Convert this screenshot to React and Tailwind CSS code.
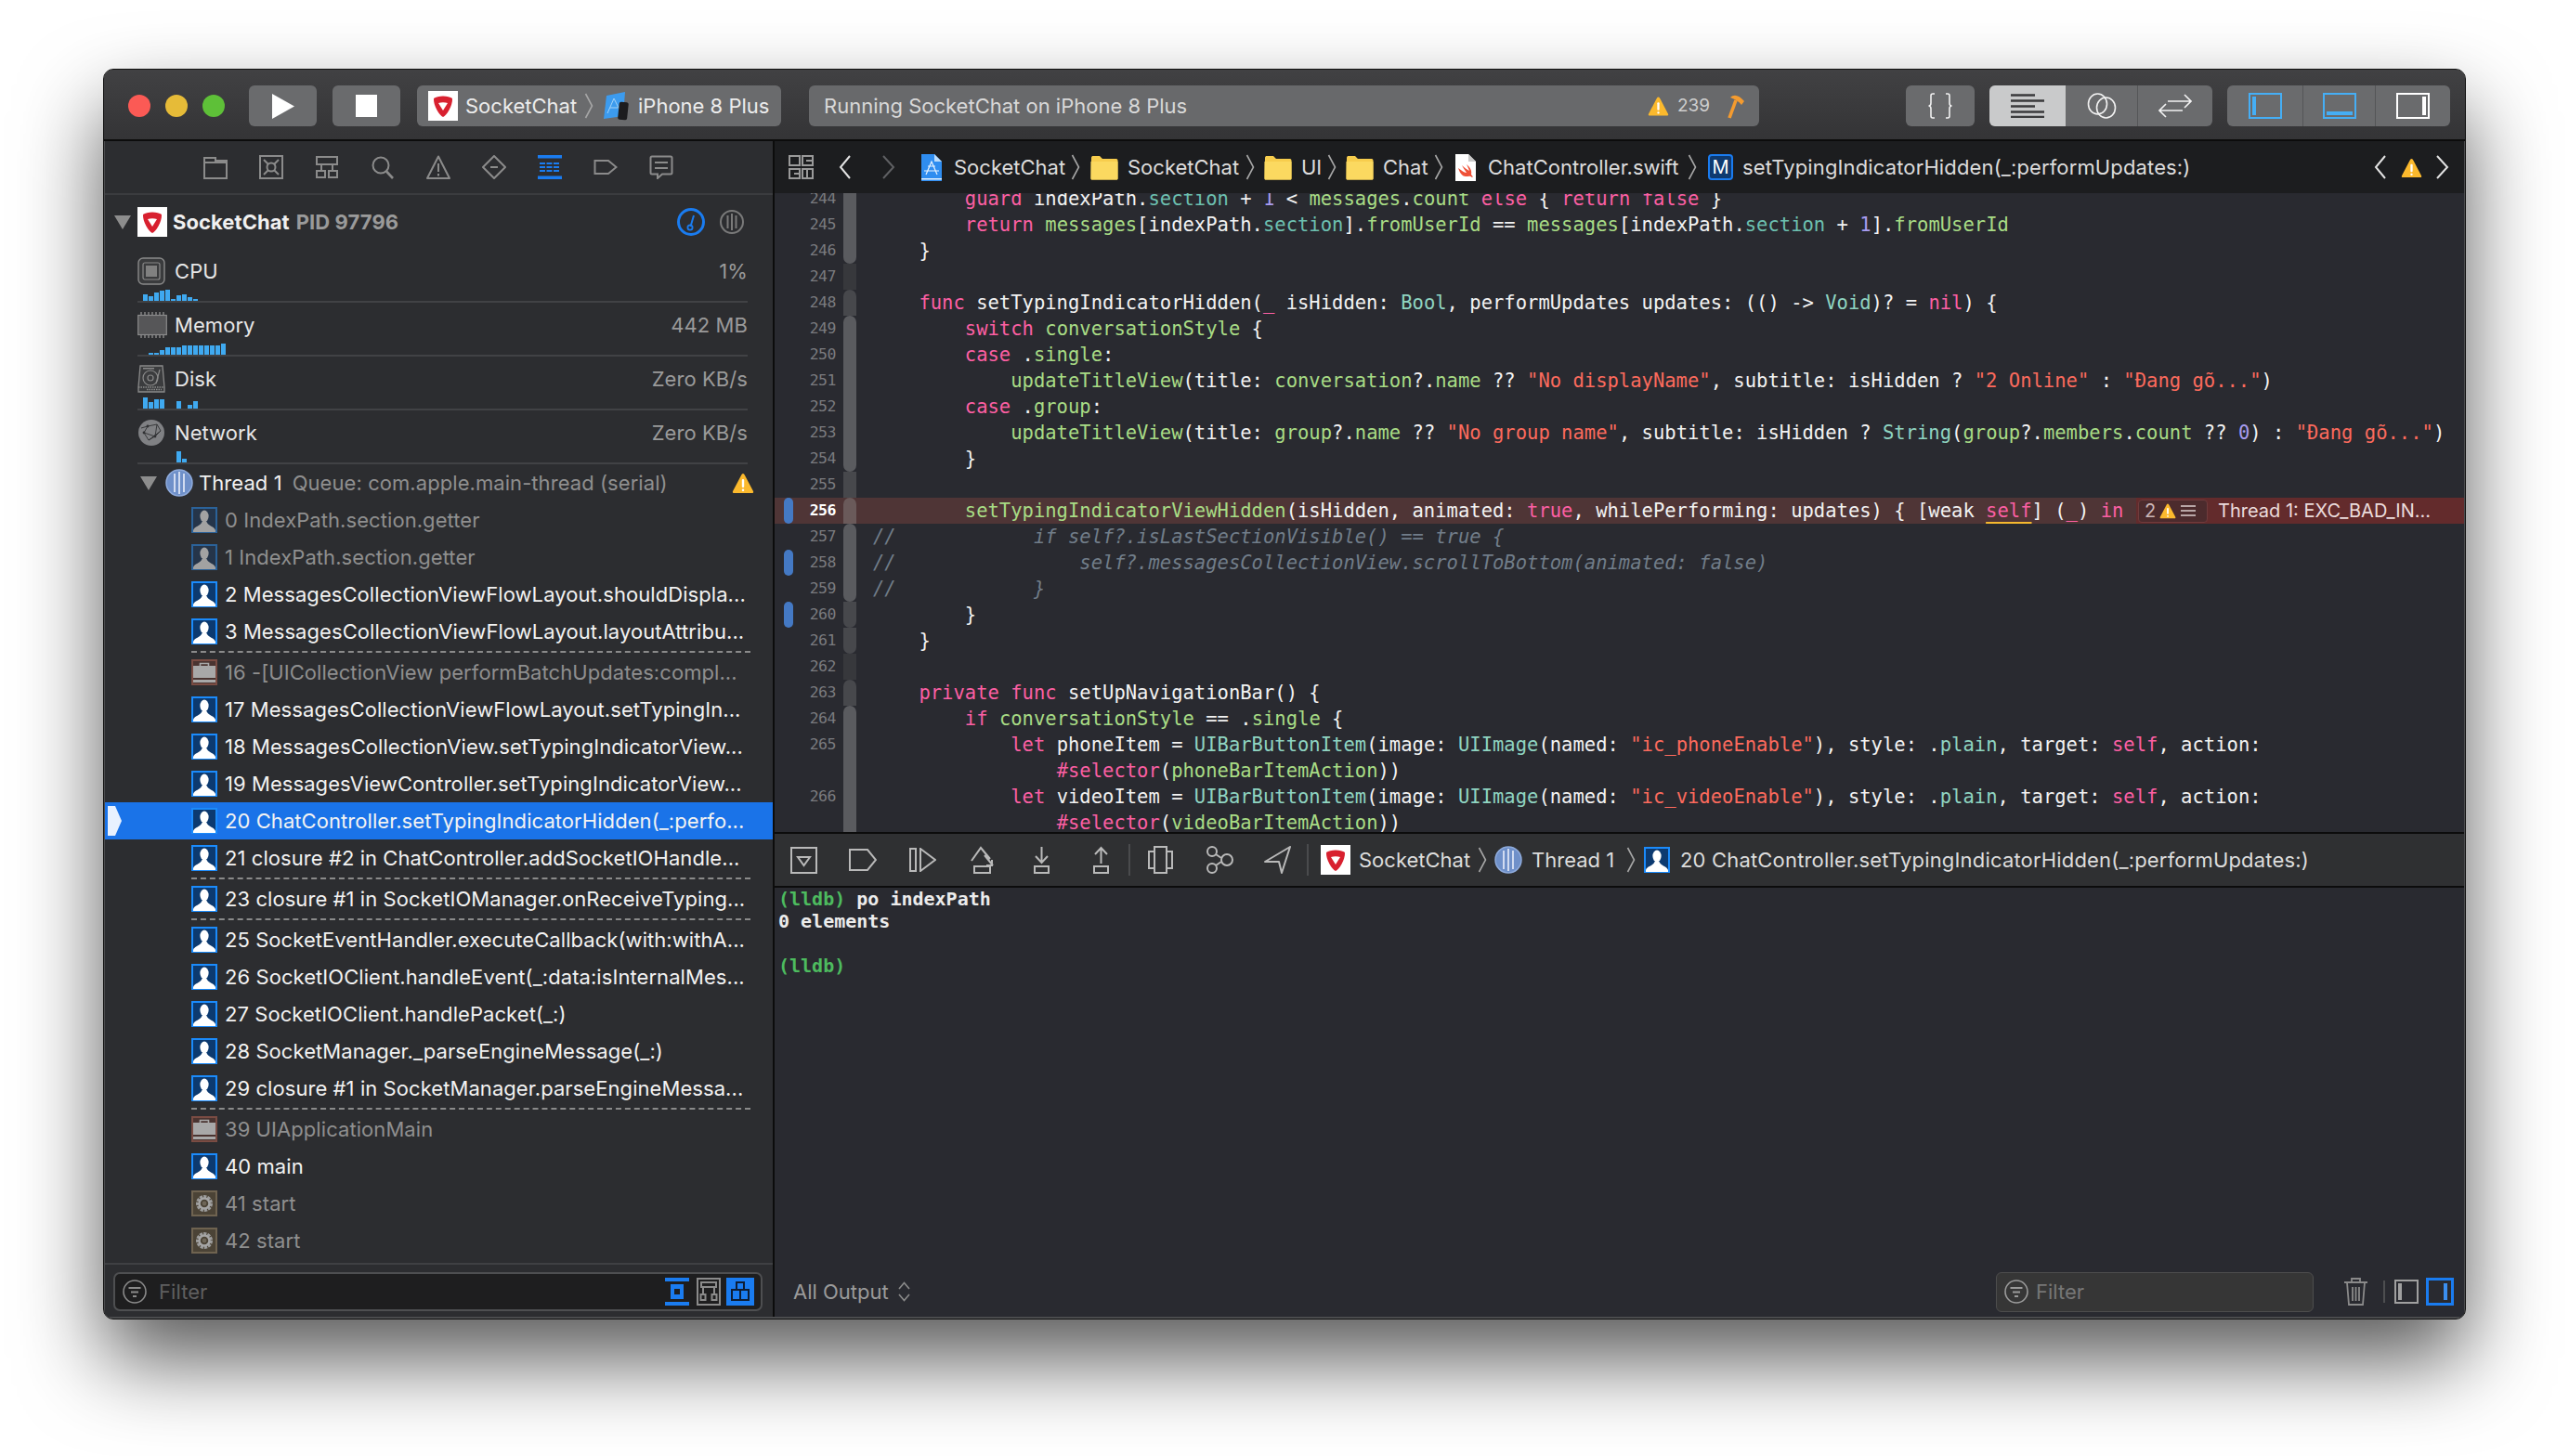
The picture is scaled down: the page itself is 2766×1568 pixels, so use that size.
import React from 'react';

const codeColors = {
  k: 'text-[#fc5fa3]',
  g: 'text-[#a8dc85]',
  t: 'text-[#6dc0b0]',
  T: 'text-[#8fd4c1]',
  s: 'text-[#fc6a5d]',
  n: 'text-[#a79cf0]',
  c: 'text-[#717d89] italic',
  u: 'text-[#fc5fa3] underline decoration-[#f5b82e] decoration-2 underline-offset-[5px]',
};

// « color : text » markup for the code lines
const Code = ({ text }) => {
  const parts = text.split(/(«\w:.*?»)/);
  return (
    <>
      {parts.map((p, i) => {
        const m = p.match(/^«(\w):(.*)»$/);
        if (m) return <span key={i} className={codeColors[m[1]]}>{m[2]}</span>;
        return <span key={i}>{p}</span>;
      })}
    </>
  );
};

const R_DARK = 'bg-[#37383c]';
const R_MID = 'bg-[#47484c]';
const R_LIGHT = 'bg-[#5a5b5f]';

const lines = [
  { n: 244, rib: R_LIGHT, code: '        «k:guard» indexPath.«t:section» + «n:1» < «g:messages».«g:count» «k:else» { «k:return» «k:false» }' },
  { n: 245, rib: R_LIGHT, code: '        «k:return» «g:messages»[indexPath.«t:section»].«g:fromUserId» == «g:messages»[indexPath.«t:section» + «n:1»].«g:fromUserId»' },
  { n: 246, rib: R_LIGHT + ' rounded-b-[7px]', code: '    }' },
  { n: 247, rib: R_DARK, code: '' },
  { n: 248, rib: R_MID + ' rounded-t-[7px]', code: '    «k:func» setTypingIndicatorHidden(«k:_» isHidden: «T:Bool», performUpdates updates: (() -> «T:Void»)? = «k:nil») {' },
  { n: 249, rib: R_LIGHT + ' rounded-t-[7px]', code: '        «k:switch» «g:conversationStyle» {' },
  { n: 250, rib: R_LIGHT, code: '        «k:case» .«g:single»:' },
  { n: 251, rib: R_LIGHT, code: '            «g:updateTitleView»(title: «g:conversation»?.«g:name» ?? «s:"No displayName"», subtitle: isHidden ? «s:"2 Online"» : «s:"Đang gõ..."»)' },
  { n: 252, rib: R_LIGHT, code: '        «k:case» .«g:group»:' },
  { n: 253, rib: R_LIGHT, code: '            «g:updateTitleView»(title: «g:group»?.«g:name» ?? «s:"No group name"», subtitle: isHidden ? «T:String»(«g:group»?.«g:members».«g:count» ?? «n:0») : «s:"Đang gõ..."»)' },
  { n: 254, rib: R_LIGHT + ' rounded-b-[7px]', code: '        }' },
  { n: 255, rib: R_MID, code: '' },
  { n: 256, rib: 'bg-[#6a5a5a] rounded-t-[7px]', bp: true, crash: true, code: '        «g:setTypingIndicatorViewHidden»(isHidden, animated: «k:true», whilePerforming: updates) { [weak «u:self»] («k:_») «k:in»' },
  { n: 257, rib: R_LIGHT + ' rounded-t-[7px]', code: '«c://            if self?.isLastSectionVisible() == true {»' },
  { n: 258, rib: R_LIGHT, bp: true, code: '«c://                self?.messagesCollectionView.scrollToBottom(animated: false)»' },
  { n: 259, rib: R_LIGHT + ' rounded-b-[7px]', code: '«c://            }»' },
  { n: 260, rib: R_MID + ' rounded-b-[7px]', bp: true, code: '        }' },
  { n: 261, rib: R_MID + ' rounded-b-[7px]', code: '    }' },
  { n: 262, rib: R_DARK, code: '' },
  { n: 263, rib: R_MID + ' rounded-t-[7px]', code: '    «k:private» «k:func» setUpNavigationBar() {' },
  { n: 264, rib: R_LIGHT + ' rounded-t-[7px]', code: '        «k:if» «g:conversationStyle» == .«g:single» {' },
  { n: 265, rib: R_LIGHT, code: '            «k:let» phoneItem = «T:UIBarButtonItem»(image: «T:UIImage»(named: «s:"ic_phoneEnable"»), style: .«T:plain», target: «k:self», action:' },
  { rib: R_LIGHT, code: '                «k:#selector»(«g:phoneBarItemAction»))' },
  { n: 266, rib: R_LIGHT, code: '            «k:let» videoItem = «T:UIBarButtonItem»(image: «T:UIImage»(named: «s:"ic_videoEnable"»), style: .«T:plain», target: «k:self», action:' },
  { rib: R_LIGHT, code: '                «k:#selector»(«g:videoBarItemAction»))' },
];

const frames = [
  { t: 'u', dim: true, s: '0 IndexPath.section.getter' },
  { t: 'u', dim: true, s: '1 IndexPath.section.getter' },
  { t: 'u', s: '2 MessagesCollectionViewFlowLayout.shouldDispla...' },
  { t: 'u', s: '3 MessagesCollectionViewFlowLayout.layoutAttribu...' },
  { sep: true },
  { t: 'b', dim: true, s: '16 -[UICollectionView performBatchUpdates:compl...' },
  { t: 'u', s: '17 MessagesCollectionViewFlowLayout.setTypingIn...' },
  { t: 'u', s: '18 MessagesCollectionView.setTypingIndicatorView...' },
  { t: 'u', s: '19 MessagesViewController.setTypingIndicatorView...' },
  { t: 'u', sel: true, s: '20 ChatController.setTypingIndicatorHidden(_:perfo...' },
  { t: 'u', s: '21 closure #2 in ChatController.addSocketIOHandle...' },
  { sep: true },
  { t: 'u', s: '23 closure #1 in SocketIOManager.onReceiveTyping...' },
  { sep: true },
  { t: 'u', s: '25 SocketEventHandler.executeCallback(with:withA...' },
  { t: 'u', s: '26 SocketIOClient.handleEvent(_:data:isInternalMes...' },
  { t: 'u', s: '27 SocketIOClient.handlePacket(_:)' },
  { t: 'u', s: '28 SocketManager._parseEngineMessage(_:)' },
  { t: 'u', s: '29 closure #1 in SocketManager.parseEngineMessa...' },
  { sep: true },
  { t: 'b', dim: true, s: '39 UIApplicationMain' },
  { t: 'u', s: '40 main' },
  { t: 'g', dim: true, s: '41 start' },
  { t: 'g', dim: true, s: '42 start' },
];

const gauges = [
  { label: 'CPU', value: '1%', icon: 'cpu', pad: 6, bars: [7, 5, 9, 11, 12, 2, 6, 7, 4, 2] },
  { label: 'Memory', value: '442 MB', icon: 'mem', pad: 12, bars: [2, 2, 5, 8, 8, 8, 10, 10, 10, 10, 10, 10, 10, 12] },
  { label: 'Disk', value: 'Zero KB/s', icon: 'disk', pad: 6, bars: [12, 7, 10, 10, 0, 0, 8, 0, 4, 8] },
  { label: 'Network', value: 'Zero KB/s', icon: 'net', pad: 6, bars: [0, 0, 0, 0, 0, 0, 12, 4] },
];

/* ---- icons ---- */

const AppLogo = ({ size = 32 }) => (
  <svg width={size} height={size} viewBox="0 0 32 32" className="shrink-0">
    <rect width="32" height="32" fill="#fff" />
    <path d="M6 8 C10 4.5 22 4.5 26 8 C26.5 16 20 26 16 28 C12 26 5.5 16 6 8 Z" fill="#d8202f" />
    <path d="M11 13 C14 12 18 12 21 13 L16 21 Z" fill="#fff" />
  </svg>
);

const Warn = ({ w = 24, h = 24 }) => (
  <svg width={w} height={h} viewBox="0 0 24 24" className="shrink-0">
    <path d="M12 2 C13 2 13.5 3 14 4 L23 21 C23.5 22.5 23 23 21.5 23 L2.5 23 C1 23 .5 22.5 1 21 L10 4 C10.5 3 11 2 12 2 Z" fill="#fbb92d" />
    <rect x="10.8" y="8" width="2.4" height="9" rx="1" fill="#fff" />
    <rect x="10.8" y="18.5" width="2.4" height="2.4" rx="1" fill="#fff" />
  </svg>
);

const ThreadIcon = ({ w = 30, h = 30 }) => (
  <svg width={w} height={h} viewBox="0 0 30 30" className="shrink-0">
    <circle cx="15" cy="15" r="14" fill="#6f90c9" stroke="#8fabdc" strokeWidth="1.5" />
    <path d="M10 5 V25 M15 3 V27 M20 5 V25" stroke="#e9eefa" strokeWidth="1.6" />
  </svg>
);

const UserFrame = ({ dim }) => (
  <svg width="28" height="28" viewBox="0 0 28 28" className="shrink-0">
    <rect x="1" y="1" width="26" height="26" fill={dim ? '#25354a' : '#0c3a70'} stroke={dim ? '#2b6299' : '#1b8bfb'} strokeWidth="2" />
    <ellipse cx="14" cy="10" rx="4.6" ry="6.4" fill={dim ? '#a2a2a2' : '#fff'} />
    <path d="M2 27 V25 C3 21 10 20.5 11.5 16 H16.5 C18 20.5 25 21 26 25 V27 Z" fill={dim ? '#a2a2a2' : '#fff'} />
  </svg>
);

const CaseFrame = () => (
  <svg width="28" height="28" viewBox="0 0 28 28" className="shrink-0">
    <rect x="1" y="1" width="26" height="26" fill="#4a3431" stroke="#7a4c43" strokeWidth="2" />
    <path d="M9.5 7 V4.5 H18.5 V7" fill="none" stroke="#a8a8a8" strokeWidth="1.6" />
    <rect x="2" y="7" width="24" height="13" fill="#a8a8a8" />
    <rect x="2" y="22" width="24" height="3" fill="#a8a8a8" />
  </svg>
);

const GearFrame = () => (
  <svg width="28" height="28" viewBox="0 0 28 28" className="shrink-0">
    <rect x="1" y="1" width="26" height="26" fill="#4b4336" stroke="#6f6350" strokeWidth="2" />
    <circle cx="14" cy="14" r="7" fill="none" stroke="#9c9c9c" strokeWidth="4" strokeDasharray="3 1" />
    <circle cx="14" cy="14" r="5.5" fill="none" stroke="#a6a6a6" strokeWidth="2.5" />
    <circle cx="14" cy="14" r="2.4" fill="#6e6658" />
  </svg>
);

const Tri = ({ w = 18, h = 15 }) => (
  <svg width={w} height={h} viewBox="0 0 18 15" className="shrink-0">
    <path d="M0 0 H18 L9 15 Z" fill="#8d8d8d" />
  </svg>
);

const Chev = ({ w = 10, h = 28 }) => (
  <svg width={w} height={h} viewBox="0 0 10 28" className="shrink-0" fill="none">
    <path d="M1.5 1 L8.5 14 L1.5 27" stroke="#a6a6a6" strokeWidth="1.6" />
  </svg>
);

const Ic = ({ w = 26, h = 26, vb = '0 0 26 26', c = '#8b8b8b', sw = 2, children }) => (
  <svg width={w} height={h} viewBox={vb} fill="none" stroke={c} strokeWidth={sw} className="shrink-0">
    {children}
  </svg>
);

const NavIcons = [
  <Ic key="0"><path d="M1 4 V25 H25 V6 H13 V3 H1 Z M1 8 H25" /></Ic>,
  <Ic key="1"><rect x="1" y="1" width="24" height="24" /><path d="M5 5 L10 10 M21 5 L16 10 M5 21 L10 16 M21 21 L16 16" /><circle cx="13" cy="13" r="4.5" /></Ic>,
  <Ic key="2"><rect x="2" y="2" width="22" height="8" /><path d="M7 10 V16 M19 10 V16" /><rect x="2" y="17" width="9" height="7" /><rect x="15" y="17" width="9" height="7" /></Ic>,
  <Ic key="3"><circle cx="11" cy="11" r="8.5" /><path d="M17 17.5 L24 25" strokeWidth="2.6" /></Ic>,
  <Ic key="4"><path d="M13 1.5 L25 25 H1 Z" strokeLinejoin="round" /><path d="M13 9 V18 M13 20 V22.5" /></Ic>,
  <Ic key="5"><path d="M13 1 L25 13 L13 25 L1 13 Z" strokeLinejoin="round" /><path d="M9 13 H17" /></Ic>,
  <Ic key="6" c="#1a7cf0"><rect x="0" y="0" width="26" height="3.5" fill="#1a7cf0" stroke="none" /><rect x="0" y="22.5" width="26" height="3.5" fill="#1a7cf0" stroke="none" /><path d="M2 9 H24 M2 13 H24 M2 17 H24" strokeDasharray="6 1.5" /></Ic>,
  <Ic key="7"><path d="M1.5 6 H16 L24.5 13 L16 20 H1.5 Z" /></Ic>,
  <Ic key="8"><path d="M3 1.5 H23 C24 1.5 24.5 2 24.5 3 V19 C24.5 20 24 20.5 23 20.5 H14 L9 25 V20.5 H3 C2 20.5 1.5 20 1.5 19 V3 C1.5 2 2 1.5 3 1.5 Z" /><path d="M6 8 H20 M6 14 H20" /></Ic>,
];

const GaugeIcon = ({ type }) => {
  if (type === 'cpu')
    return (
      <svg width="30" height="30" viewBox="0 0 30 30" className="shrink-0">
        <rect x="1" y="1" width="28" height="28" rx="5" fill="#3a3b3d" stroke="#8a8a8a" strokeWidth="1.4" />
        <rect x="6" y="6" width="18" height="18" rx="2" fill="none" stroke="#8a8a8a" strokeWidth="1.2" />
        <rect x="9" y="9" width="12" height="12" fill="#808080" />
      </svg>
    );
  if (type === 'mem')
    return (
      <svg width="32" height="28" viewBox="0 0 32 28" className="shrink-0">
        <path d="M4 0 V4 M8 0 V4 M12 0 V4 M16 0 V4 M20 0 V4 M24 0 V4 M28 0 V4 M4 24 V28 M8 24 V28 M12 24 V28 M16 24 V28 M20 24 V28 M24 24 V28 M28 24 V28" stroke="#8a8a8a" strokeWidth="1.4" />
        <rect x=".7" y="3.5" width="30.6" height="21" fill="#565658" stroke="#8a8a8a" strokeWidth="1.2" />
      </svg>
    );
  if (type === 'disk')
    return (
      <svg width="30" height="30" viewBox="0 0 30 30" className="shrink-0">
        <path d="M3 1 H27 L29 24 V29 H1 V24 Z" fill="#3b3c3e" stroke="#8a8a8a" strokeWidth="1.3" />
        <rect x="6" y="3" width="12" height="1.5" fill="#8a8a8a" />
        <circle cx="14" cy="14" r="8" fill="none" stroke="#8a8a8a" strokeWidth="1.2" />
        <circle cx="14" cy="14" r="3" fill="none" stroke="#8a8a8a" strokeWidth="1.2" />
        <path d="M24 5 L20 20" stroke="#8a8a8a" strokeWidth="1.2" />
        <path d="M1 24 H29 M10 26.5 H26" stroke="#8a8a8a" strokeWidth="1.6" strokeDasharray="1.5 1" />
      </svg>
    );
  return (
    <svg width="30" height="30" viewBox="0 0 30 30" className="shrink-0">
      <circle cx="15" cy="15" r="14" fill="#808184" />
      <path d="M4 10 L11 8 L21 6 L25 13 L19 19 L12 23 L7 15 L11 8 M21 6 L19 19 M7 15 L19 19 M25 13 L12 23" stroke="#303133" strokeWidth=".9" fill="none" />
      <circle cx="11" cy="8" r="1.4" fill="#303133" />
      <circle cx="19" cy="19" r="1.4" fill="#303133" />
      <circle cx="7" cy="15" r="1.4" fill="#303133" />
    </svg>
  );
};

const Folder = () => (
  <svg width="30" height="27" viewBox="0 0 30 27" className="shrink-0">
    <path d="M1 3 C1 1.5 2 1 3 1 H10 L13 4 H28 C29 4 29.5 5 29.5 6 V25 C29.5 26 29 26.5 28 26.5 H2 C1 26.5 .5 26 .5 25 Z" fill="#f7cd4d" />
    <path d="M.5 7 H29.5 V25 C29.5 26 29 26.5 28 26.5 H2 C1 26.5 .5 26 .5 25 Z" fill="#fbd960" />
  </svg>
);

const FilterIcon = ({ c = '#8a8a8a' }) => (
  <svg width="26" height="26" viewBox="0 0 26 26" fill="none" className="shrink-0">
    <circle cx="13" cy="13" r="12" stroke={c} strokeWidth="1.6" />
    <path d="M6.5 9 H19.5 M9 13.5 H17 M11 18 H15" stroke={c} strokeWidth="2" />
  </svg>
);

const ModeButton = ({ w, active, border, children }) => (
  <div className={`flex h-full items-center justify-center ${w} ${active ? 'bg-[#c9cacb]' : ''} ${border ? 'border-l border-[#555658]' : ''}`}>
    {children}
  </div>
);

const TitleBar = () => (
  <div className="flex h-[77px] shrink-0 items-center border-b-2 border-[#0c0c0c] bg-gradient-to-b from-[#414143] to-[#343436] pt-[3px]">
    <div className="ml-[26px] h-[24px] w-[24px] rounded-full bg-[#fb5a55]" />
    <div className="ml-[16px] h-[24px] w-[24px] rounded-full bg-[#e6bb38]" />
    <div className="ml-[16px] h-[24px] w-[24px] rounded-full bg-[#5ec038]" />

    <div className="ml-[26px] flex h-[44px] w-[73px] items-center justify-center rounded-[6px] bg-[#6a6b6d]">
      <svg width="24" height="27" viewBox="0 0 24 27"><path d="M0 0 L24 13.5 L0 27 Z" fill="#fff" /></svg>
    </div>
    <div className="ml-[17px] flex h-[44px] w-[73px] items-center justify-center rounded-[6px] bg-[#6a6b6d]">
      <div className="h-[24px] w-[23px] bg-white" />
    </div>

    <div className="ml-[18px] flex h-[44px] w-[392px] items-center rounded-[6px] bg-[#6a6b6d] pl-[12px] text-[22px] text-[#ececec]">
      <AppLogo />
      <span className="ml-[8px] w-[121px]">SocketChat</span>
      <span className="ml-[7px]"><Chev /></span>
      <svg width="28" height="32" viewBox="0 0 28 32" className="ml-[10px] shrink-0">
        <path d="M4 5 L24 1 L22 27 L1 30 Z" fill="#3c9bee" />
        <path d="M5 24 L12 8 L19 22 M8 18 H16" stroke="#a5d4f8" strokeWidth="1" fill="none" />
        <rect x="17" y="12" width="10" height="19" rx="2" fill="#1c1c1e" transform="rotate(6 22 21)" />
      </svg>
      <span className="ml-[10px]">iPhone 8 Plus</span>
    </div>

    <div className="ml-[30px] flex h-[44px] w-[1023px] items-center rounded-[6px] bg-[#68696b] pl-[16px] text-[22px] text-[#d8d8d8]">
      <span>Running SocketChat on iPhone 8 Plus</span>
      <span className="ml-auto"><Warn w={23} h={24} /></span>
      <span className="ml-[9px] w-[34px] text-[19px] text-[#cfcfcf]">239</span>
      <svg width="20" height="28" viewBox="0 0 20 28" className="ml-[19px] mr-[15px] shrink-0" fill="none">
        <path d="M3 27 L10 8" stroke="#f49b2f" strokeWidth="3.6" />
        <path d="M4 5 C8 1 13 2 19 9 L16 13 C13 9 9 7 4 5 Z" fill="#f49b2f" />
      </svg>
    </div>

    <div className="ml-[158px] flex h-[44px] w-[74px] items-center justify-center rounded-[6px] bg-[#6a6b6d]">
      <svg width="26" height="28" viewBox="0 0 26 28" fill="none" stroke="#f2f2f2" strokeWidth="1.6">
        <path d="M7 1 H5 C3.5 1 3 2 3 3 V11 C3 13 2 14 .5 14 C2 14 3 15 3 17 V25 C3 26 3.5 27 5 27 H7" />
        <path d="M19 1 H21 C22.5 1 23 2 23 3 V11 C23 13 24 14 25.5 14 C24 14 23 15 23 17 V25 C23 26 22.5 27 21 27 H19" />
      </svg>
    </div>

    <div className="ml-[16px] flex h-[44px] w-[240px] overflow-hidden rounded-[6px] bg-[#6a6b6d]">
      <ModeButton w="w-[82px]" active>
        <svg width="36" height="26" viewBox="0 0 36 26" stroke="#3a3a3c" strokeWidth="2.4">
          <path d="M0 1.5 H26 M0 7.5 H36 M0 13.5 H26 M0 19.5 H36 M0 25 H36" />
        </svg>
      </ModeButton>
      <ModeButton w="w-[77px]">
        <svg width="32" height="28" viewBox="0 0 32 28" fill="none" stroke="#f2f2f2" strokeWidth="1.6">
          <ellipse cx="11.5" cy="12" rx="10" ry="11" />
          <ellipse cx="20.5" cy="16" rx="10" ry="11" />
        </svg>
      </ModeButton>
      <ModeButton w="w-[81px]" border>
        <svg width="36" height="28" viewBox="0 0 36 28" fill="none" stroke="#f2f2f2" strokeWidth="1.6">
          <path d="M10 9 H35 M28 2 L35 9 L28 16" />
          <path d="M26 19 H1 M8 12 L1 19 L8 26" />
        </svg>
      </ModeButton>
    </div>

    <div className="ml-[16px] flex h-[44px] w-[240px] overflow-hidden rounded-[6px] bg-[#6a6b6d]">
      <ModeButton w="w-[81px]">
        <svg width="36" height="28" viewBox="0 0 36 28" fill="none">
          <rect x="1" y="1" width="34" height="26" stroke="#45aef5" strokeWidth="2" />
          <rect x="4" y="4" width="4" height="20" fill="#45aef5" />
        </svg>
      </ModeButton>
      <ModeButton w="w-[78px]" border>
        <svg width="36" height="28" viewBox="0 0 36 28" fill="none">
          <rect x="1" y="1" width="34" height="26" stroke="#45aef5" strokeWidth="2" />
          <rect x="4" y="20" width="28" height="4" fill="#45aef5" />
        </svg>
      </ModeButton>
      <ModeButton w="w-[81px]" border>
        <svg width="36" height="28" viewBox="0 0 36 28" fill="none">
          <rect x="1" y="1" width="34" height="26" stroke="#fff" strokeWidth="2" />
          <rect x="28" y="4" width="4" height="20" fill="#fff" />
        </svg>
      </ModeButton>
    </div>
  </div>
);

const GaugeRow = ({ g }) => (
  <div className="ml-[35px] mr-[27px] flex h-[58px] flex-col border-b-2 border-[#414245]">
    <div className="mt-[2px] flex h-[44px] shrink-0 items-center">
      <div className="flex w-[40px] shrink-0"><GaugeIcon type={g.icon} /></div>
      <span className="text-[#e6e6e6]">{g.label}</span>
      <span className="ml-auto text-[#9a9a9a]">{g.value}</span>
    </div>
    <div className="flex h-[10px] shrink-0 items-end gap-[1.5px]" style={{ paddingLeft: g.pad }}>
      {g.bars.map((h, i) => (
        <div key={i} className="w-[4.5px] shrink-0 bg-[#3fa9f0]" style={{ height: h }} />
      ))}
    </div>
  </div>
);

const FrameRow = ({ f }) => {
  if (f.sep) return <div className="ml-[93px] mr-[24px] flex h-[4px] items-center"><div className="w-full border-t-2 border-dashed border-[#8a8a8a]" /></div>;
  return (
    <div className={`flex h-[40px] items-center pl-[93px] whitespace-nowrap ${f.sel ? 'bg-[#1a73e8]' : ''}`}>
      {f.t === 'u' && <UserFrame dim={f.dim} />}
      {f.t === 'b' && <CaseFrame />}
      {f.t === 'g' && <GearFrame />}
      <span className={`ml-[8px] ${f.dim ? 'text-[#8f8f8f]' : 'text-[#f2f2f2]'}`}>{f.s}</span>
      {f.sel && (
        <svg width="15" height="32" viewBox="0 0 15 32" className="absolute left-[3px]">
          <path d="M0 0 H8 L15 16 L8 32 H0 Z" fill="#e8f1ff" />
        </svg>
      )}
    </div>
  );
};

const Sidebar = () => (
  <div className="relative flex w-[721px] shrink-0 flex-col border-r-2 border-[#0c0c0c] bg-[#2c2d30] text-[22px] tracking-[0.003em]">
    <div className="flex h-[58px] shrink-0 items-center border-b-2 border-[#3b3c3f] bg-[#2c2d30] pl-[89px]">
      {NavIcons.map((icon, i) => (
        <div key={i} className="flex w-[60px] justify-center">{icon}</div>
      ))}
    </div>

    <div className="flex h-[58px] shrink-0 items-center pl-[10px] font-bold">
      <Tri />
      <span className="ml-[7px]"><AppLogo /></span>
      <span className="ml-[6px] text-[#f0f0f0]">SocketChat</span>
      <span className="ml-[7px] text-[#9a9a9a]">PID 97796</span>
      <svg width="30" height="30" viewBox="0 0 30 30" fill="none" className="ml-auto">
        <circle cx="15" cy="15" r="13.5" stroke="#1a7cf0" strokeWidth="3" />
        <path d="M18 8 L14.5 20" stroke="#1a7cf0" strokeWidth="2" />
        <circle cx="14" cy="21" r="2.6" stroke="#1a7cf0" strokeWidth="1.8" />
      </svg>
      <svg width="26" height="26" viewBox="0 0 26 26" fill="none" className="ml-[16px] mr-[31px]">
        <circle cx="13" cy="13" r="12" stroke="#7a7a7a" strokeWidth="2" />
        <path d="M8.5 6 V20 M13 4 V22 M17.5 6 V20" stroke="#7a7a7a" strokeWidth="2" />
      </svg>
    </div>

    {gauges.map((g) => <GaugeRow key={g.label} g={g} />)}

    <div className="flex h-[40px] shrink-0 items-center whitespace-nowrap pl-[38px]">
      <Tri />
      <span className="ml-[9px]"><ThreadIcon /></span>
      <span className="ml-[6px] text-[#f0f0f0]">Thread 1</span>
      <span className="ml-[11px] text-[#8f8f8f]">Queue: com.apple.main-thread (serial)</span>
      <span className="ml-auto mr-[20px]"><Warn /></span>
    </div>

    <div className="min-h-0 flex-1 overflow-hidden">
      {frames.map((f, i) => <FrameRow key={i} f={f} />)}
      <div className="flex h-[40px] items-center pl-[66px]"><ThreadIcon /></div>
    </div>

    <div className="flex h-[58px] shrink-0 items-start border-t-2 border-[#3f4043] pt-[8px]">
      <div className="ml-[9px] flex h-[42px] w-[699px] items-center rounded-[7px] border-2 border-[#4e4f51] bg-[#1e1e1f] pl-[8px]">
        <FilterIcon />
        <span className="ml-[13px] text-[#5f5f5f]">Filter</span>
        <svg width="26" height="30" viewBox="0 0 26 30" className="ml-auto" fill="#1a7cf0">
          <rect width="26" height="4" />
          <rect y="26" width="26" height="4" />
          <path d="M6 7 H20 V23 H6 Z M10 12 V18 H16 V12 Z" fillRule="evenodd" />
        </svg>
        <svg width="26" height="30" viewBox="0 0 26 30" fill="none" stroke="#8b8b8b" strokeWidth="2" className="ml-[8px]">
          <rect x="1" y="1" width="24" height="28" />
          <rect x="5" y="5" width="16" height="5" />
          <path d="M7 10 V18 M19 10 V18" />
          <rect x="4.5" y="18" width="5" height="6" />
          <rect x="16.5" y="18" width="5" height="6" />
        </svg>
        <svg width="30" height="30" viewBox="0 0 30 30" fill="none" className="ml-[6px] mr-[7px]">
          <rect width="30" height="30" fill="#1a7cf0" />
          <path d="M11 5 H19 V13 H11 Z M6 13 H24 V24 H6 Z M15 13 V24" stroke="#0e1d33" strokeWidth="2" />
        </svg>
      </div>
    </div>
  </div>
);

const JumpBar = () => (
  <div className="flex h-[56px] shrink-0 items-center whitespace-nowrap bg-[#1c1d1f] text-[22px] text-[#dcdcdc]">
    <svg width="27" height="26" viewBox="0 0 27 26" fill="none" stroke="#9a9a9a" strokeWidth="2" className="ml-[15px] shrink-0">
      <rect x="1" y="1" width="11" height="10" />
      <rect x="15" y="1" width="11" height="10" />
      <rect x="1" y="15" width="11" height="10" />
      <rect x="15" y="15" width="11" height="10" />
      <path d="M19 6 H26 M6 20 H12 M20 15 V25" />
    </svg>
    <svg width="13" height="26" viewBox="0 0 13 26" fill="none" stroke="#e2e2e2" strokeWidth="2" className="ml-[27px] shrink-0"><path d="M12 1 L2 13 L12 25" /></svg>
    <svg width="14" height="26" viewBox="0 0 14 26" fill="none" stroke="#5f6063" strokeWidth="2" className="ml-[34px] shrink-0"><path d="M1 1 L12 13 L1 25" /></svg>
    <svg width="22" height="29" viewBox="0 0 22 29" className="ml-[28px] shrink-0">
      <path d="M0 0 H14 L22 8 V29 H0 Z" fill="#2f8df0" />
      <path d="M14 0 L22 8 H14 Z" fill="#bcdcfb" />
      <path d="M5 22 L11 8 L17 22 M3 18 H19 M7 13 H15" stroke="#e8f3ff" strokeWidth="1.2" fill="none" />
      <rect y="26" width="22" height="1.5" fill="#e8f3ff" />
    </svg>
    <span className="ml-[13px] w-[121px]">SocketChat</span>
    <span className="ml-[5px]"><Chev /></span>
    <span className="ml-[11px]"><Folder /></span>
    <span className="ml-[10px] w-[121px]">SocketChat</span>
    <span className="ml-[6px]"><Chev /></span>
    <span className="ml-[10px]"><Folder /></span>
    <span className="ml-[10px] w-[21px]">UI</span>
    <span className="ml-[7px]"><Chev /></span>
    <span className="ml-[10px]"><Folder /></span>
    <span className="ml-[10px] w-[48px]">Chat</span>
    <span className="ml-[7px]"><Chev /></span>
    <svg width="22" height="29" viewBox="0 0 22 29" className="ml-[13px] shrink-0">
      <path d="M0 0 H14 L22 8 V29 H0 Z" fill="#fff" />
      <path d="M14 0 L22 8 H14 Z" fill="#c8c8c8" />
      <path d="M3 15 C7 18 10 20 12 20 C10 17 8 14 7 12 C10 15 13 17 15 18 C14 15 13 13 12 11 C16 14 18 18 17 22 C19 24 19 25 18 25 C16 23 14 24 11 24 C8 24 5 21 3 15 Z" fill="#ef5138" />
    </svg>
    <span className="ml-[13px] w-[208px]">ChatController.swift</span>
    <span className="ml-[7px]"><Chev /></span>
    <div className="ml-[12px] flex h-[28px] w-[27px] shrink-0 items-center justify-center rounded-[4px] border-2 border-[#1a7cf0] bg-[#0e3a70] text-[20px] text-white">M</div>
    <span className="ml-[10px] tracking-[0.006em]">setTypingIndicatorHidden(_:performUpdates:)</span>
    <svg width="13" height="26" viewBox="0 0 13 26" fill="none" stroke="#e2e2e2" strokeWidth="2" className="ml-auto shrink-0"><path d="M12 1 L2 13 L12 25" /></svg>
    <span className="ml-[16px]"><Warn w={23} h={25} /></span>
    <svg width="14" height="26" viewBox="0 0 14 26" fill="none" stroke="#e2e2e2" strokeWidth="2" className="ml-[15px] mr-[16px] shrink-0"><path d="M1 1 L12 13 L1 25" /></svg>
  </div>
);

const CodeRow = ({ l }) => (
  <div className={`flex h-[28px] shrink-0 ${l.crash ? 'bg-[#4f3536]' : ''}`}>
    <div className="flex w-[74px] shrink-0 items-center">
      <div className={`ml-[10px] h-[28px] w-[10px] shrink-0 rounded-[5px] ${l.bp ? 'bg-[#4479c4]' : ''}`} />
      <div className={`flex-1 pr-[8px] text-right font-['DejaVu_Sans_Mono'] text-[16.5px] tracking-[-0.5px] ${l.crash ? 'font-bold text-white' : 'text-[#7a7b7f]'}`}>{l.n}</div>
    </div>
    <div className={`w-[14px] shrink-0 ${l.rib}`} />
    <div className="flex-1 overflow-hidden whitespace-pre pl-[18px] leading-[28px]">
      <Code text={l.code} />
    </div>
    {l.crash && (
      <div className="flex w-[353px] shrink-0 items-center bg-[#632b2c] font-['Inter'] text-[20px] text-[#ebdcdc]">
        <div className="ml-[2px] flex h-[25px] w-[75px] shrink-0 items-center rounded-[4px] border border-[#6f3b3c] bg-[#4c2b2d] pl-[6px] font-['Inter']">
          <span className="text-[#cbb6b6]">2</span>
          <span className="ml-[4px]"><Warn w={18} h={20} /></span>
          <svg width="16" height="14" viewBox="0 0 16 14" stroke="#b8a6a6" strokeWidth="2" className="ml-[5px]"><path d="M0 2 H16 M0 7 H16 M0 12 H16" /></svg>
        </div>
        <span className="ml-[11px] whitespace-nowrap">Thread 1: EXC_BAD_IN...</span>
      </div>
    )}
  </div>
);

const Box = ({ ml, children }) => <div className={`flex shrink-0 ${ml}`}>{children}</div>;

const DebugBar = () => {
  const d = '#b9b9b9';
  return (
    <div className="flex h-[56px] shrink-0 items-center whitespace-nowrap bg-[#2f3032] text-[22px] text-[#dcdcdc]">
      <Box ml="ml-[17px]"><Ic w={29} h={29} vb="0 0 29 29" c={d}><rect x="1" y="1" width="27" height="27" /><path d="M8 11 H21 L14.5 20 Z" /></Ic></Box>
      <Box ml="ml-[34px]"><Ic w={30} h={24} vb="0 0 30 24" c={d}><path d="M1 1 H20 L29 12 L20 23 H1 Z" /></Ic></Box>
      <Box ml="ml-[35px]"><Ic w={29} h={26} vb="0 0 29 26" c={d}><rect x="1" y="1" width="6" height="24" /><path d="M12 1 L28 13 L12 25 Z" /></Ic></Box>
      <Box ml="ml-[36px]"><Ic w={27} h={30} vb="0 0 27 30" c={d}><path d="M2 16 L12 2 L22 14 M25 21 L16 10" /><path d="M24 15 V21 H18" /><rect x="5" y="22" width="17" height="7" /></Ic></Box>
      <Box ml="ml-[42px]"><Ic w={17} h={30} vb="0 0 17 30" c={d}><path d="M8.5 1 V17 M2 11 L8.5 18 L15 11" /><rect x="1" y="22" width="15" height="7" /></Ic></Box>
      <Box ml="ml-[47px]"><Ic w={17} h={30} vb="0 0 17 30" c={d}><path d="M8.5 19 V3 M2 9 L8.5 2 L15 9" /><rect x="1" y="22" width="15" height="7" /></Ic></Box>
      <div className="ml-[21px] h-[34px] w-[2px] shrink-0 bg-[#4a4b4d]" />
      <Box ml="ml-[19px]"><Ic w={27} h={30} vb="0 0 27 30" c={d}><rect x="7" y="1" width="13" height="28" /><path d="M7 6 H1 V24 H7 M20 6 H26 V24 H20" /></Ic></Box>
      <Box ml="ml-[35px]"><Ic w={30} h={30} vb="0 0 30 30" c={d}><circle cx="7" cy="6" r="5" /><circle cx="7" cy="24" r="5" /><circle cx="23" cy="15" r="6" /><path d="M11 9 L17 13 M11 21 L17 17" /></Ic></Box>
      <Box ml="ml-[33px]"><Ic w={29} h={30} vb="0 0 29 30" c={d}><path d="M28 1 L1 17 L16 17 L19 29 Z" strokeLinejoin="round" /></Ic></Box>
      <div className="ml-[17px] h-[34px] w-[2px] shrink-0 bg-[#4a4b4d]" />
      <span className="ml-[13px]"><AppLogo /></span>
      <span className="ml-[9px] w-[121px]">SocketChat</span>
      <span className="ml-[7px]"><Chev /></span>
      <span className="ml-[8px]"><ThreadIcon /></span>
      <span className="ml-[10px] w-[91px]">Thread 1</span>
      <span className="ml-[11px]"><Chev /></span>
      <span className="ml-[9px]"><UserFrame /></span>
      <span className="ml-[11px] tracking-[0.008em]">20 ChatController.setTypingIndicatorHidden(_:performUpdates:)</span>
    </div>
  );
};

const Editor = () => (
  <div className="flex min-w-0 flex-1 flex-col bg-[#292a30]">
    <JumpBar />
    <div className="h-[688px] shrink-0 overflow-hidden font-['DejaVu_Sans_Mono'] text-[20.53px] text-[#f2f2f2]">
      <div className="-mt-[8px]">
        {lines.map((l, i) => <CodeRow key={i} l={l} />)}
      </div>
    </div>
    <div className="border-y-2 border-[#0c0c0c]">
      <DebugBar />
    </div>
    <div className="min-h-0 flex-1 whitespace-pre pl-[4px] font-['DejaVu_Sans_Mono'] text-[20px] font-bold leading-[24px] text-[#ececec]">
      <div><span className="text-[#4dbb5f]">(lldb)</span> po indexPath</div>
      <div>0 elements</div>
      <div>&nbsp;</div>
      <div className="text-[#4dbb5f]">(lldb)</div>
    </div>
    <div className="flex h-[58px] shrink-0 items-center pt-[4px] text-[22px]">
      <span className="ml-[20px] text-[#9a9a9a]">All Output</span>
      <svg width="13" height="22" viewBox="0 0 13 22" fill="none" stroke="#8a8a8a" strokeWidth="1.6" className="ml-[10px]">
        <path d="M1 8 L6.5 1.5 L12 8 M1 14 L6.5 20.5 L12 14" />
      </svg>
      <div className="ml-auto flex h-[43px] w-[342px] items-center rounded-[6px] border border-[#4d4d4d] bg-[#363636] pl-[8px]">
        <FilterIcon c="#9a9a9a" />
        <span className="ml-[8px] text-[#767676]">Filter</span>
      </div>
      <svg width="25" height="30" viewBox="0 0 25 30" fill="none" stroke="#8a8a8a" strokeWidth="1.8" className="ml-[33px]">
        <path d="M0 5 H25 M8 5 V1 H17 V5 M3 5 L5 29 H20 L22 5 M9 10 V25 M12.5 10 V25 M16 10 V25" />
      </svg>
      <div className="ml-[17px] h-[24px] w-[2px] bg-[#4d4e50]" />
      <svg width="26" height="26" viewBox="0 0 26 26" fill="none" className="ml-[10px]">
        <rect x="1" y="1" width="24" height="24" stroke="#a0a0a0" strokeWidth="2" />
        <rect x="4" y="4" width="4" height="18" fill="#a0a0a0" />
      </svg>
      <svg width="30" height="30" viewBox="0 0 30 30" fill="none" className="ml-[8px] mr-[11px]">
        <rect x="1.5" y="1.5" width="27" height="27" stroke="#1a7cf0" strokeWidth="3" />
        <rect x="19" y="6" width="4" height="18" fill="#3b8ff0" />
      </svg>
    </div>
  </div>
);

export default function App() {
  return (
    <div className="h-[1568px] w-[2766px] overflow-hidden bg-white pl-[112px] pt-[75px] font-['Inter',sans-serif]">
      <div className="flex h-[1345px] w-[2542px] flex-col overflow-hidden rounded-[10px] bg-[#2c2d30] shadow-[0_44px_90px_rgba(0,0,0,0.66)] outline outline-1 outline-[#111]">
        <TitleBar />
        <div className="flex min-h-0 flex-1 border-x border-b-2 border-[#4b4c4e]">
          <Sidebar />
          <Editor />
        </div>
      </div>
    </div>
  );
}
